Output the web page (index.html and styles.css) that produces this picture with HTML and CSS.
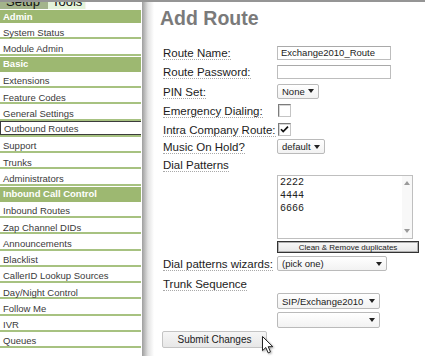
FILE: index.html
```html
<!DOCTYPE html>
<html lang="en">
<head>
    <meta charset="UTF-8">
    <meta name="viewport" content="width=device-width, initial-scale=1.0">
    <title>Add Route</title>
    <link rel="stylesheet" href="styles.css">
</head>
<body>
<div class="page">
    <!-- left menu -->
    <div class="sidebar">
        <div class="tabs">
            <span class="tab tab-setup">Setup</span>
            <span class="tab tab-tools">Tools</span>
        </div>
        <ul class="menu">
            <li class="head first">Admin</li>
            <li>System Status</li>
            <li>Module Admin</li>
            <li class="head">Basic</li>
            <li>Extensions</li>
            <li>Feature Codes</li>
            <li>General Settings</li>
            <li class="current"><span>Outbound Routes</span></li>
            <li>Support</li>
            <li>Trunks</li>
            <li>Administrators</li>
            <li class="head">Inbound Call Control</li>
            <li>Inbound Routes</li>
            <li>Zap Channel DIDs</li>
            <li>Announcements</li>
            <li>Blacklist</li>
            <li>CallerID Lookup Sources</li>
            <li>Day/Night Control</li>
            <li>Follow Me</li>
            <li>IVR</li>
            <li>Queues</li>
        </ul>
    </div>
    <div class="shadow"></div>

    <!-- route form -->
    <div class="content">
        <h2>Add Route</h2>
        <form class="route-form">
            <div class="row">
                <label><span>Route Name:</span></label>
                <input class="text" type="text" value="Exchange2010_Route">
            </div>
            <div class="row">
                <label><span>Route Password:</span></label>
                <input class="text" type="text" value="">
            </div>
            <div class="row row-20">
                <label><span>PIN Set:</span></label>
                <span class="select select-none">None<svg width="6" height="4" viewBox="0 0 6 4"><path d="M0 0h6L3 4z" fill="#222"/></svg></span>
            </div>
            <div class="row">
                <label><span>Emergency Dialing:</span></label>
                <span class="checkbox"></span>
            </div>
            <div class="row row-18">
                <label><span>Intra Company Route:</span></label>
                <span class="checkbox"><svg width="11" height="11" viewBox="0 0 11 11"><path d="M2 5.2l2.2 2.4L9 2.6" fill="none" stroke="#111" stroke-width="1.7"/></svg></span>
            </div>
            <div class="row row-17">
                <label><span>Music On Hold?</span></label>
                <span class="select select-default">default<svg width="6" height="4" viewBox="0 0 6 4"><path d="M0 0h6L3 4z" fill="#222"/></svg></span>
            </div>
            <div class="row">
                <label><span>Dial Patterns</span></label>
            </div>
            <div class="patterns">
                <textarea>2222
4444
6666</textarea>
                <div class="scroll">
                    <svg width="6" height="4" viewBox="0 0 6 4"><path d="M0 4h6L3 0z" fill="#9a9a9a"/></svg>
                    <svg width="6" height="4" viewBox="0 0 6 4"><path d="M0 0h6L3 4z" fill="#9a9a9a"/></svg>
                </div>
            </div>
            <button type="button" class="clean">Clean &amp; Remove duplicates</button>
            <div class="row row-wizard">
                <label><span>Dial patterns wizards:</span></label>
                <span class="select select-wide">(pick one)<svg width="6" height="4" viewBox="0 0 6 4"><path d="M0 0h6L3 4z" fill="#222"/></svg></span>
            </div>
            <div class="row row-20">
                <label><span>Trunk Sequence</span></label>
            </div>
            <div class="trunk">
                <span class="select select-trunk">SIP/Exchange2010<svg width="6" height="4" viewBox="0 0 6 4"><path d="M0 0h6L3 4z" fill="#222"/></svg></span>
                <span class="select select-trunk"><svg width="6" height="4" viewBox="0 0 6 4"><path d="M0 0h6L3 4z" fill="#222"/></svg></span>
            </div>
            <div class="submit-row">
                <button type="button" class="submit">Submit Changes</button>
                <svg class="cursor" width="13" height="19" viewBox="0 0 13 19"><path d="M0.5 0.5v14.2l3.3-3.2 2.4 5.4 2.3-1-2.3-5.2h4.6z" fill="#fff" stroke="#222" stroke-width="1"/></svg>
            </div>
        </form>
    </div>
</div>
</body>
</html>
```

FILE: styles.css
```css
body {
    margin: 0;
    font-family: "Liberation Sans", Arial, sans-serif;
    background: #fff;
    color: #222;
}

.page {
    display: flex;
    height: 354px;
    border-top: 2px solid #959595;
    overflow: hidden;
}

/* sidebar */
.sidebar {
    width: 141px;
    flex: none;
}

.tabs {
    display: flex;
    height: 7px;
    border-bottom: 1px solid #fff;
}

.tab {
    display: block;
    font-size: 13px;
    line-height: 0;
    color: #111;
}

.tab-setup {
    background: #a3b48b;
    padding-left: 6px;
    padding-right: 8px;
}

.tab-tools {
    background: #e4f3da;
    padding-left: 4px;
    padding-right: 3px;
    border-right: 1px solid #f4f4f4;
}

.menu {
    list-style: none;
    margin: 0;
    padding: 0;
    font-size: 9.5px;
    color: #3a3a3a;
}

.menu li {
    height: 16.25px;
    box-sizing: border-box;
    border-bottom: 2px solid #a7c281;
    padding: 4.5px 0 0 3px;
    line-height: 10px;
    white-space: nowrap;
}

.menu li.head {
    background: #9db871;
    border-top: 1px solid #fff;
    border-bottom-color: #9db871;
    padding-top: 1px;
    line-height: 12px;
    color: #fff;
    font-weight: bold;
}

.menu li.first {
    height: 13px;
    border-top: none;
    border-bottom: none;
    padding-top: 0.5px;
}

.menu li.current {
    padding: 0;
}

.menu li.current span {
    display: block;
    height: 100%;
    box-sizing: border-box;
    margin-right: -3px;
    border: 1px solid #3c3c3c;
    padding: 2.5px 0 0 3px;
    line-height: 10px;
}

.shadow {
    width: 13px;
    flex: none;
    background: linear-gradient(to right, #fff 0, #fff 1px, #9e9e9e 1px, #b4b4b4 3px, #e2e2e2 7px, #fff 13px);
}

/* content */
.content {
    flex: 1;
    padding: 4px 0 0 6px;
}

.content h2 {
    margin: 0;
    font-size: 19.5px;
    line-height: 24px;
    color: #7a7a7a;
}

.route-form {
    margin: 13px 0 0 3px;
    font-size: 11.5px;
    color: #1c1c1c;
}

.row {
    display: flex;
    align-items: center;
    height: 19px;
}

.row-20 { height: 20px; }
.row-18 { height: 18px; }
.row-17 { height: 17px; }

.row-wizard {
    margin-top: 1px;
}

.row label {
    width: 114px;
    flex: none;
    padding-top: 1px;
    white-space: nowrap;
}

.row label span {
    border-bottom: 1px dotted #a9a9a9;
}

.text {
    width: 114px;
    height: 14px;
    box-sizing: border-box;
    margin: 0;
    border: 1px solid #bdbdbd;
    border-top-color: #a9a9a9;
    padding: 0 3px;
    font-family: inherit;
    font-size: 9.5px;
    color: #222;
}

.select {
    display: inline-flex;
    align-items: center;
    justify-content: space-between;
    height: 15px;
    box-sizing: border-box;
    border: 1px solid #bababa;
    border-radius: 2px;
    background: linear-gradient(#fff, #f2f2f2);
    padding: 0 4px 0 4px;
    font-size: 9.5px;
    color: #222;
}

.select-none { width: 42px; }
.select-default { width: 48px; }
.select-wide { width: 110px; }

.trunk {
    display: flex;
    flex-direction: column;
    gap: 3px;
    padding-left: 114px;
}

.select-trunk {
    width: 103px;
    height: 16px;
}

.select-trunk svg {
    margin-left: auto;
}

.checkbox {
    width: 13px;
    height: 13px;
    box-sizing: border-box;
    margin-left: 1px;
    border: 1px solid #7c7c7c;
    border-right-color: #c4c4c4;
    border-bottom-color: #c4c4c4;
    box-shadow: inset 1px 1px 0 #d6d6d6;
    background: #fff;
}

.checkbox svg {
    display: block;
}

.patterns {
    display: flex;
    width: 136px;
    height: 64px;
    box-sizing: border-box;
    margin: 1px 0 0 114px;
    border: 1px solid #bfbfbf;
}

.patterns textarea {
    flex: 1;
    min-width: 0;
    margin: 0;
    border: 0;
    padding: 0 2px;
    resize: none;
    overflow: hidden;
    font-family: "Liberation Mono", monospace;
    font-size: 10px;
    line-height: 13px;
    color: #222;
    outline: none;
}

.scroll {
    width: 10px;
    display: flex;
    flex-direction: column;
    justify-content: space-between;
    align-items: center;
    padding: 5px 0 5px;
    background: #f8f8f8;
}

.clean {
    display: block;
    width: 142px;
    height: 12px;
    margin: 2px 0 0 114px;
    padding: 0;
    border: 1px solid #333;
    box-shadow: inset 0 0 0 1px #b0b0b0;
    background: linear-gradient(#f8f8f8, #e6e6e6);
    font-family: inherit;
    font-size: 8px;
    line-height: 9px;
    color: #222;
}

.submit-row {
    position: relative;
    margin-top: 3px;
}

.submit {
    width: 105px;
    height: 17px;
    margin-left: -1px;
    padding: 0;
    border: 1px solid #c4c4c4;
    border-radius: 2px;
    background: linear-gradient(#f6f6f6, #e7e7e7);
    font-family: inherit;
    font-size: 10px;
    color: #222;
}

/* mouse pointer over the button */
.cursor {
    position: absolute;
    left: 99px;
    top: 5px;
    filter: drop-shadow(1px 1px 1px rgba(0, 0, 0, 0.35));
}
```
